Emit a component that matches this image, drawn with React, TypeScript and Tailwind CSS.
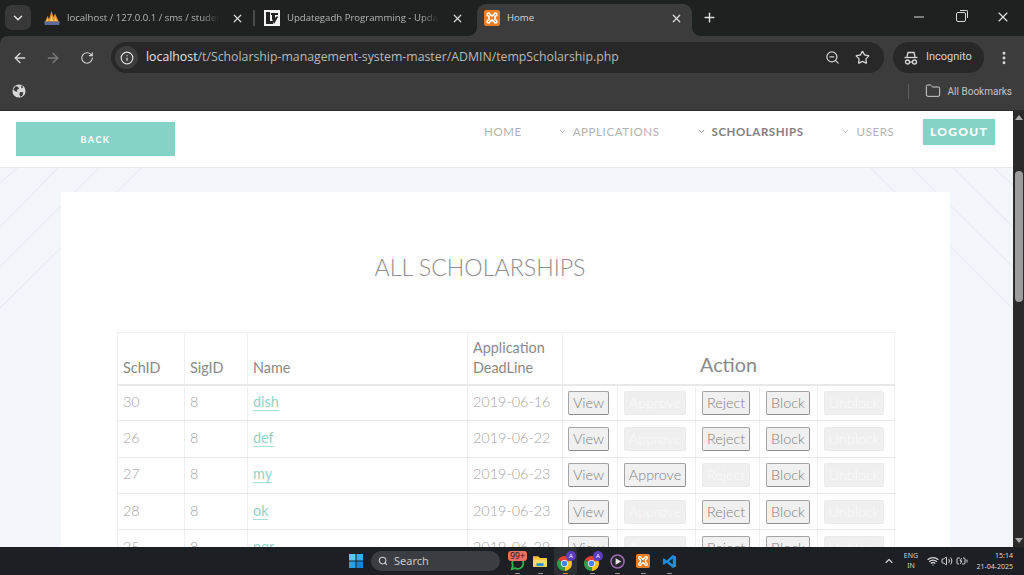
import { ArrowLeft, ArrowRight, BatteryCharging, ChevronDown, ChevronUp, Folder, Info, Minus, MoreVertical, Plus, RotateCw, Search, Star, Volume2, Wifi, X, ZoomOut } from 'lucide-react';

type Row = { sch: number; name: string; date: string; approve: boolean; reject: boolean };

const rows: Row[] = [
  { sch: 30, name: 'dish', date: '2019-06-16', approve: false, reject: true },
  { sch: 26, name: 'def', date: '2019-06-22', approve: false, reject: true },
  { sch: 27, name: 'my', date: '2019-06-23', approve: true, reject: false },
  { sch: 28, name: 'ok', date: '2019-06-23', approve: false, reject: true },
  { sch: 25, name: 'pqr', date: '2019-06-29', approve: false, reject: true },
];

const PmaIcon = () => (
  <svg width="16" height="16" viewBox="0 0 16 16">
    <path d="M1 12 L3.500 6 L5 9 L7.500 1 L9.500 7 L11 3.500 L15 12Z" fill="#e8902a" />
    <path d="M6 11 L7.800 5 L9 11Z M2.500 11 L3.700 8.500 L4.500 11Z M10.500 11 L11.200 7 L13 11Z" fill="#f6d36b" />
    <path d="M0 11.500h16l-1 3.500H1z" fill="#5f6a9c" />
  </svg>
);

const UpdategadhIcon = () => (
  <svg width="16" height="16" viewBox="0 0 16 16">
    <rect width="16" height="16" fill="#f4f4f4" />
    <path d="M2 2h4v9h3v3H2z" fill="#222" />
    <path d="M7 3h7v2h-3v3l2-2 1 1-4 7-2-5V5H7z" fill="#222" />
  </svg>
);

const XamppIcon = ({ size = 16 }: { size?: number }) => (
  <svg width={size} height={size} viewBox="0 0 16 16">
    <rect width="16" height="16" rx="2" fill="#ee7d22" />
    <path d="M3 4.500a1.500 1.500 0 0 1 3 0L8 6l2-1.500a1.500 1.500 0 0 1 3 0c0 1-1 1.500-2 2v3c1 .5 2 1 2 2a1.500 1.500 0 0 1-3 0L8 10l-2 1.500a1.500 1.500 0 0 1-3 0c0-1 1-1.500 2-2v-3c-1-.5-2-1-2-2z" fill="none" stroke="#fff" strokeWidth="1.600" />
  </svg>
);

const IncognitoIcon = () => (
  <svg width="16" height="16" viewBox="0 0 16 16" fill="none" stroke="#d8d8d8" strokeWidth="1.300">
    <path d="M4 7l1-4.500h6L12 7" />
    <path d="M1.500 7.500h13" />
    <circle cx="4.500" cy="12" r="2" />
    <circle cx="11.500" cy="12" r="2" />
    <path d="M6.500 12h3" />
  </svg>
);

const ChromeBadge = ({ letter }: { letter: string }) => (
  <div className="relative h-[17px] w-[17px]">
    <svg width="15" height="15" viewBox="0 0 16 16" className="mt-[3px]">
      <path d="M8 8 L1.100 4 A8 8 0 0 1 14.900 4Z" fill="#e34133" />
      <path d="M8 8 L14.900 4 A8 8 0 0 1 8 16Z" fill="#f5c11b" />
      <path d="M8 8 L8 16 A8 8 0 0 1 1.100 4Z" fill="#2f9e48" />
      <circle cx="8" cy="8" r="3.800" fill="#fff" />
      <circle cx="8" cy="8" r="3" fill="#3f83ee" />
    </svg>
    <div className="absolute right-[-2px] top-[-2px] h-[10px] w-[10px] rounded-full bg-[#5b3cc4] text-center text-[6px] leading-[10px] text-white">{letter}</div>
  </div>
);

const Tab = ({ icon, title, className }: { icon: React.ReactNode; title: string; className: string }) => (
  <div className={`flex items-center ${className}`}>
    <div className="h-4 w-4 shrink-0">{icon}</div>
    <span className="ml-[7px] flex-1 overflow-hidden whitespace-nowrap font-['Open_Sans',sans-serif] text-[9.600px] text-[#b5b5b5] [mask-image:linear-gradient(to_right,black_88%,transparent)]">{title}</span>
    <X className="ml-3 h-[13px] w-[13px] shrink-0 text-[#d8d8d8]" strokeWidth={2.2} />
  </div>
);

const TaskIcon = ({ className, dash = '#9a9a9a', children }: { className: string; dash?: string; children: React.ReactNode }) => (
  <div className={`relative flex h-full shrink-0 items-center justify-center ${className}`}>
    {children}
    <div className="absolute bottom-[1px] h-[1.500px] w-[5px] rounded-full" style={{ backgroundColor: dash }} />
  </div>
);

const ActionButton = ({ label, active, className }: { label: string; active: boolean; className: string }) => (
  <div className={`flex h-[24px] items-center justify-center rounded-[2px] border text-[14.400px] font-light ${className} ${active ? 'border-[#a4a4a4] border-b-[#8c8c8c] border-r-[#969696] bg-[#f0f0f0] text-[#808080]' : 'border-[#ebebeb] bg-[#efefef] text-[#fafafa]'}`}>
    {label}
  </div>
);

const BackgroundLines = () => (
  <svg className="absolute left-0 top-0" width="1013" height="436" stroke="#e5e8ee" strokeWidth="1" fill="none">
    <path d="M17 57 L0 72 M58 57 L0 116 M99 57 L0 156 M141 57 L0 197" />
    <path d="M871 57 L1013 198 M912 57 L1013 156 M953 57 L1013 116 M994 57 L1013 74" />
  </svg>
);

const App = () => {
  return (
    <div className="flex h-[575px] w-[1024px] flex-col overflow-hidden bg-[#1f2020] font-['Lato',sans-serif]">
      {/* browser chrome */}
      <div className="flex h-[36px] shrink-0 items-end bg-[#1f2020] pl-[5px] font-['Roboto',sans-serif]">
        <div className="mb-[6px] flex h-[25px] w-[26px] items-center justify-center rounded-[7px] bg-[#383838]">
          <ChevronDown className="h-[14px] w-[14px] text-[#e0e0e0]" strokeWidth={2.6} />
        </div>
        <Tab icon={<PmaIcon />} title="localhost / 127.0.0.1 / sms / student" className="ml-[2px] h-[36px] w-[220px] pl-[11px] pr-[9px]" />
        <div className="mb-[10px] h-[16px] w-[2px] bg-[#4a4a4a]" />
        <Tab icon={<UpdategadhIcon />} title="Updategadh Programming - Updategadh" className="h-[36px] w-[216px] pl-[9px] pr-[7px]" />
        <div className="relative ml-[6px] h-[32px] w-[215px] rounded-t-[9px] bg-[#3c3c3c]">
          <div className="absolute bottom-0 left-[-8px] h-[8px] w-[8px] bg-[radial-gradient(circle_at_0_0,transparent_7.500px,#3c3c3c_8px)]" />
          <div className="absolute bottom-0 right-[-8px] h-[8px] w-[8px] bg-[radial-gradient(circle_at_100%_0,transparent_7.500px,#3c3c3c_8px)]" />
          <div className="flex h-full items-center pb-[4px] pl-[7px] pr-[9px]">
            <XamppIcon />
            <span className="ml-[7px] flex-1 font-['Open_Sans',sans-serif] text-[9.600px] text-[#d6d6d6]">Home</span>
            <X className="h-[13px] w-[13px] text-[#e0e0e0]" strokeWidth={2.2} />
          </div>
        </div>
        <div className="mb-[11px] ml-[10px] flex h-[16px] items-center">
          <Plus className="h-[15px] w-[15px] text-[#e0e0e0]" strokeWidth={2.2} />
        </div>
        <div className="mb-[11px] ml-auto flex items-center gap-[29px] pr-[13px]">
          <Minus className="h-[16px] w-[16px] text-[#d8d8d8]" strokeWidth={1.5} />
          <div className="relative h-[10px] w-[10px] rounded-[2px] border border-[#d8d8d8]">
            <div className="absolute right-[-3px] top-[-3px] h-[8px] w-[8px] rounded-tr-[2px] border-r border-t border-[#d8d8d8]" />
          </div>
          <X className="h-[16px] w-[16px] text-[#e4e4e4]" strokeWidth={1.6} />
        </div>
      </div>

      <div className="flex h-[43px] shrink-0 items-center rounded-tl-[8px] bg-[#3c3c3c] pl-[12px] font-['Roboto',sans-serif]">
        <ArrowLeft className="h-[16px] w-[16px] text-[#d8d8d8]" strokeWidth={2} />
        <ArrowRight className="ml-[17px] h-[16px] w-[16px] text-[#7d7d7d]" strokeWidth={2} />
        <RotateCw className="ml-[19px] h-[14px] w-[14px] text-[#d0d0d0]" strokeWidth={2} />
        <div className="ml-[17px] flex h-[31px] w-[773px] items-center rounded-full bg-[#282828] pl-[4px]">
          <div className="flex h-[23px] w-[23px] items-center justify-center rounded-full bg-[#3d3d3d]">
            <Info className="h-[14px] w-[14px] text-[#e0e0e0]" strokeWidth={2} />
          </div>
          <span className="ml-[8px] flex-1 font-['Open_Sans',sans-serif] text-[12.300px] text-[#b9b9b9]"><span className="text-[#e4e4e4]">localhost</span>/t/Scholarship-management-system-master/ADMIN/tempScholarship.php</span>
          <ZoomOut className="h-[15px] w-[15px] text-[#d0d0d0]" strokeWidth={2} />
          <Star className="ml-[15px] mr-[14px] h-[15px] w-[15px] text-[#d8d8d8]" strokeWidth={2} />
        </div>
        <div className="ml-[9px] flex h-[31px] w-[91px] items-center rounded-full bg-[#282828] pl-[10px]">
          <IncognitoIcon />
          <span className="ml-[7px] text-[11px] text-[#d4d4d4]">Incognito</span>
        </div>
        <MoreVertical className="ml-[12px] h-[16px] w-[16px] text-[#d8d8d8]" strokeWidth={2.4} />
      </div>

      <div className="flex h-[32px] shrink-0 items-center border-b border-[#2c2c2c] bg-[#3c3c3c] pb-[7px] pl-[12px] pr-[12px] font-['Roboto',sans-serif]">
        <svg width="14" height="14" viewBox="0 0 16 16">
          <circle cx="8" cy="8" r="7.500" fill="#d8d8d8" />
          <path d="M4 2.500 L7 3 L8 5.500 L5.500 7 L6 9 L3 8 L1.500 6Z M9 9 L13 9.500 L12 13 L9.500 14.500 L8.500 12Z M10 1.500 L13 3.500 L11 5Z" fill="#3c3c3c" />
        </svg>
        <div className="ml-auto h-[15px] w-[1px] bg-[#5e5e5e]" />
        <Folder className="ml-[16px] h-[16px] w-[16px] text-[#d0d0d0]" strokeWidth={1.5} />
        <span className="ml-[7px] text-[10px] text-[#c4c4c4]">All Bookmarks</span>
      </div>

      <div className="flex min-h-0 flex-1">
        <div className="relative flex-1 overflow-hidden bg-[#f2f5fa]">
          {/* site nav */}
          <div className="relative z-10 flex h-[57px] items-start border-b border-[#e9e9e9] bg-white pl-[16px] pr-[18px]">
            <div className="mt-[11px] flex h-[34px] w-[159px] items-center justify-center bg-[#84d3c6] pt-[1px] text-[9px] font-black tracking-[1.400px] text-white">BACK</div>
            <div className="ml-[309px] mt-[12px] text-[11.500px] tracking-[0.600px] text-[#b2b2b2]">HOME</div>
            <div className="ml-[36px] mt-[12px] flex items-center text-[11.500px] tracking-[0.600px] text-[#b2b2b2]">
              <ChevronDown className="mr-[6px] h-[9px] w-[9px]" strokeWidth={2.5} />APPLICATIONS
            </div>
            <div className="ml-[37px] mt-[12px] flex items-center text-[11.500px] font-bold tracking-[0.550px] text-[#7f7f7f]">
              <ChevronDown className="mr-[6px] h-[9px] w-[9px]" strokeWidth={2.5} />SCHOLARSHIPS
            </div>
            <div className="ml-[37px] mt-[12px] flex items-center text-[11.500px] tracking-[0.600px] text-[#b2b2b2]">
              <ChevronDown className="mr-[7px] h-[9px] w-[9px]" strokeWidth={2.5} />USERS
            </div>
            <div className="ml-auto mt-[8px] flex h-[26px] w-[72px] items-center justify-center bg-[#84d3c6] text-[12px] font-black tracking-[1.300px] text-white">LOGOUT</div>
          </div>
          <BackgroundLines />

          {/* content card */}
          <div className="relative ml-[61px] mt-[24px] h-[600px] w-[889px] bg-white pl-[56px]">
            <h1 className="pr-[107px] pt-[62px] text-center text-[23.200px] font-light leading-[27px] text-[#8e8e8e]">ALL SCHOLARSHIPS</h1>
            <table className="mt-[51px] w-[778px] table-fixed border-collapse text-left text-[14.400px] text-[#8a8a8a]">
              <colgroup>
                <col className="w-[67px]" />
                <col className="w-[63px]" />
                <col className="w-[220px]" />
                <col className="w-[95px]" />
                <col className="w-[55px]" />
                <col className="w-[78px]" />
                <col className="w-[64px]" />
                <col className="w-[58px]" />
                <col className="w-[77px]" />
              </colgroup>
              <thead>
                <tr className="h-[52px]">
                  <th className="border border-[#efefef] border-b-2 border-b-[#e8e8e8] px-[5px] pb-[6px] align-bottom font-normal leading-[20px]">SchID</th>
                  <th className="border border-[#efefef] border-b-2 border-b-[#e8e8e8] px-[5px] pb-[6px] align-bottom font-normal leading-[20px]">SigID</th>
                  <th className="border border-[#efefef] border-b-2 border-b-[#e8e8e8] px-[5px] pb-[6px] align-bottom font-normal leading-[20px]">Name</th>
                  <th className="border border-[#efefef] border-b-2 border-b-[#e8e8e8] px-[5px] pb-[6px] align-bottom font-normal leading-[20px]">Application DeadLine</th>
                  <th colSpan={5} className="border border-[#efefef] border-b-2 border-b-[#e8e8e8] pb-[4px] align-bottom text-center text-[19.800px] font-normal">Action</th>
                </tr>
              </thead>
              <tbody className="font-light text-[#a4a4a4]">
                {rows.map((row) => (
                  <tr key={row.sch} className="h-[36.300px]">
                    <td className="border border-[#efefef] border-b-[#e8e8e8] px-[5px] pb-[2px]">{row.sch}</td>
                    <td className="border border-[#efefef] border-b-[#e8e8e8] px-[5px] pb-[2px]">8</td>
                    <td className="border border-[#efefef] border-b-[#e8e8e8] px-[5px] pb-[2px] font-normal text-[#8fd5ca]">
                      <span className="border-b border-[#a5dfd5]">{row.name}</span>
                    </td>
                    <td className="border border-[#efefef] border-b-[#e8e8e8] px-[5px] pb-[2px]">{row.date}</td>
                    <td className="border border-[#efefef] border-b-[#e8e8e8] px-[5px]"><ActionButton label="View" active className="w-[41px]" /></td>
                    <td className="border border-[#efefef] border-b-[#e8e8e8] px-[6px]"><ActionButton label="Approve" active={row.approve} className="w-[62px]" /></td>
                    <td className="border border-[#efefef] border-b-[#e8e8e8] px-[6px]"><ActionButton label="Reject" active={row.reject} className="w-[48px]" /></td>
                    <td className="border border-[#efefef] border-b-[#e8e8e8] px-[6px]"><ActionButton label="Block" active className="w-[44px]" /></td>
                    <td className="border border-[#efefef] border-b-[#e8e8e8] px-[6px]"><ActionButton label="Unblock" active={false} className="w-[60px]" /></td>
                  </tr>
                ))}
              </tbody>
            </table>
          </div>
        </div>

        {/* scrollbar */}
        <div className="flex w-[11px] shrink-0 flex-col items-center bg-[#2a2a2a] pb-[4px] pt-[4px]">
          <div className="h-0 w-0 border-x-[4px] border-b-[5px] border-x-transparent border-b-[#a8a8a8]" />
          <div className="mt-[51px] h-[131px] w-[8px] rounded-full bg-[#9c9c9c]" />
          <div className="mt-auto h-0 w-0 border-x-[4px] border-t-[5px] border-x-transparent border-t-[#a8a8a8]" />
        </div>
      </div>

      {/* windows taskbar */}
      <div className="flex h-[28px] shrink-0 items-center bg-[#1c1f24] pl-[349px] pr-[11px] font-['Noto_Sans',sans-serif]">
        <svg width="14" height="14" viewBox="0 0 14 14" className="shrink-0">
          <rect width="6.500" height="6.500" fill="#5cc6f2" />
          <rect x="7.500" width="6.500" height="6.500" fill="#35aeea" />
          <rect y="7.500" width="6.500" height="6.500" fill="#2a9fe6" />
          <rect x="7.500" y="7.500" width="6.500" height="6.500" fill="#1685d8" />
        </svg>
        <div className="ml-[8px] flex h-[20px] w-[129px] shrink-0 items-center rounded-full bg-[#3a3d42] pl-[7px]">
          <Search className="h-[10px] w-[10px] text-[#d4d4d4]" strokeWidth={2.500} />
          <span className="ml-[6px] text-[11px] text-[#c8c8c8]">Search</span>
        </div>
        <TaskIcon className="ml-[7px] w-[20px]">
          <svg width="15" height="15" viewBox="0 0 16 16" className="mt-[4px]">
            <path d="M2 14l1-3.500A6 6 0 1 1 5.500 13z" fill="none" stroke="#2fb34f" strokeWidth="2" />
          </svg>
          <div className="absolute left-[1px] top-[4px] h-[10px] w-[19px] rounded-[3px] bg-[#e8705f] text-center text-[8.500px] leading-[10px] text-[#3a1210]">99+</div>
        </TaskIcon>
        <TaskIcon className="ml-[6px] w-[14px]">
          <svg width="14" height="13" viewBox="0 0 16 14">
            <path d="M0 1h6l2 2h8v10H0z" fill="#f5c636" />
            <rect y="5" width="16" height="8" fill="#fbdc6b" />
            <rect x="4" y="9" width="8" height="3" fill="#1f8ed8" />
          </svg>
        </TaskIcon>
        <TaskIcon className="ml-[7px] w-[23px] rounded-[3px] bg-[#2c2f34]" dash="#e8863a"><ChromeBadge letter="A" /></TaskIcon>
        <TaskIcon className="ml-[7px] w-[17px]"><ChromeBadge letter="A" /></TaskIcon>
        <TaskIcon className="ml-[9px] w-[15px]">
          <svg width="15" height="15" viewBox="0 0 16 16">
            <circle cx="8" cy="8" r="7" fill="#26262c" stroke="#a06ab4" strokeWidth="1.600" />
            <path d="M6 4.500 L12 8 L6 11.500Z" fill="#e4e4e4" />
          </svg>
        </TaskIcon>
        <TaskIcon className="ml-[11px] w-[14px]"><XamppIcon size={14} /></TaskIcon>
        <TaskIcon className="ml-[12px] w-[15px]">
          <svg width="15" height="15" viewBox="0 0 16 16">
            <path d="M11.500 1 L15 2.600 V13.400 L11.500 15 L5 9.200 L2 11.500 L1 11 V5 L2 4.500 L5 6.800Z M11.500 4.800 L7.500 8 L11.500 11.200Z" fill="#1b8fdc" fillRule="evenodd" />
          </svg>
        </TaskIcon>
        <ChevronUp className="ml-[206px] h-[12px] w-[12px] shrink-0 text-[#d8d8d8]" strokeWidth={2.2} />
        <div className="ml-[6px] w-[20px] shrink-0 text-center text-[7px] leading-[10px] text-[#d0d0d0]">ENG<br />IN</div>
        <Wifi className="ml-[6px] h-[12px] w-[12px] shrink-0 text-[#d8d8d8]" strokeWidth={2.5} />
        <Volume2 className="ml-[2px] h-[12px] w-[12px] shrink-0 text-[#d8d8d8]" strokeWidth={2} />
        <BatteryCharging className="ml-[3px] h-[12px] w-[12px] shrink-0 text-[#d8d8d8]" strokeWidth={2} />
        <div className="ml-auto whitespace-nowrap text-right text-[7px] leading-[11px] text-[#d8d8d8]">15:14<br />21-04-2025</div>
      </div>
    </div>
  );
};

export default App;
